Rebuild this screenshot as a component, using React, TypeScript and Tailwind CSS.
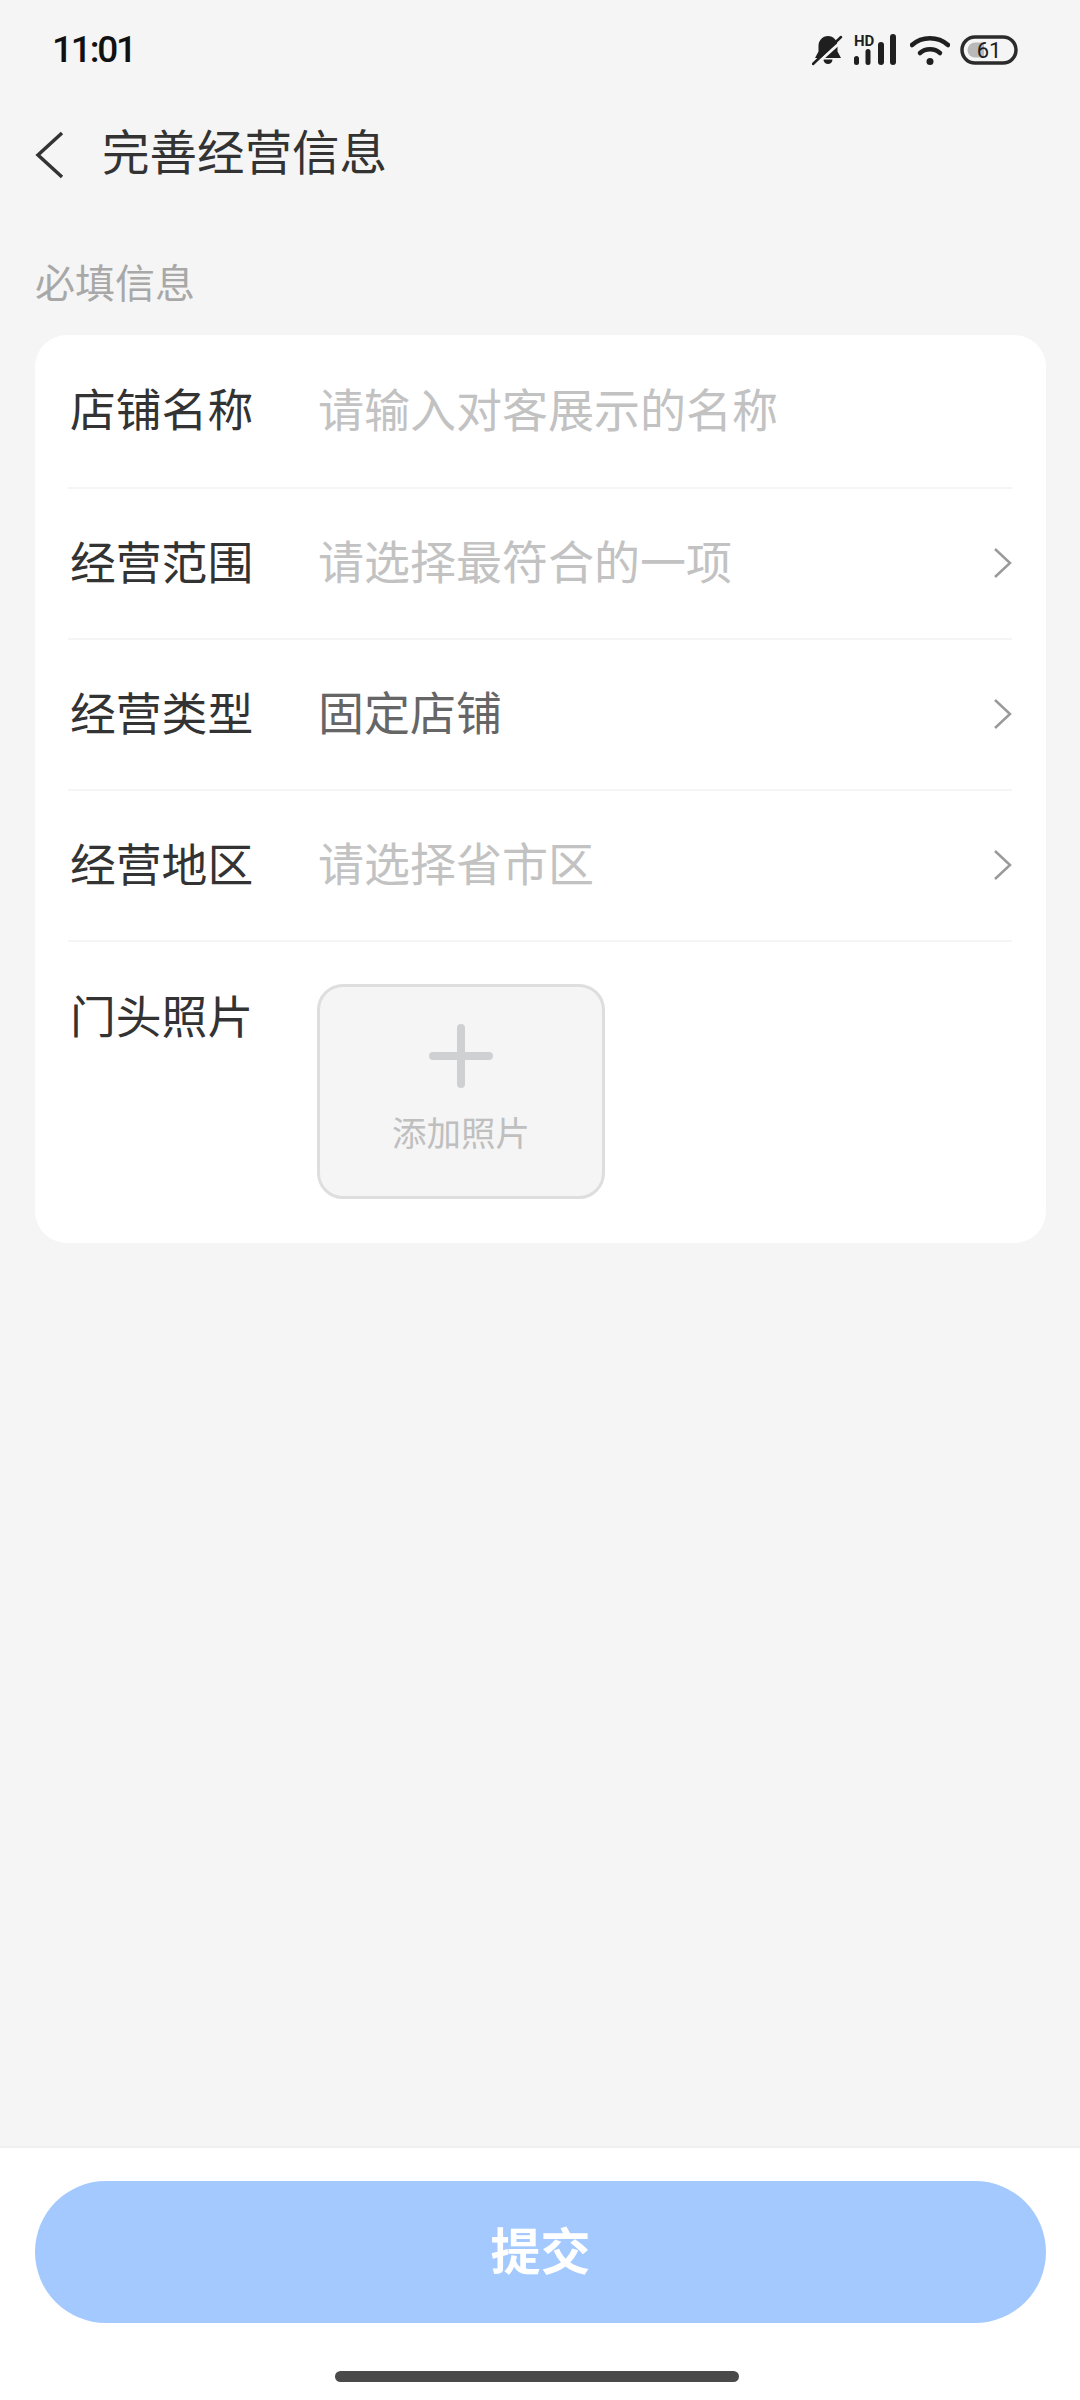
import React from 'react';

const cjk = "font-['Noto_Sans_CJK_SC','Noto_Sans',sans-serif]";

const Chevron = () => (
  <svg width="20" height="32" viewBox="0 0 20 32" fill="none" className="shrink-0 -mr-[1px] -mt-[2px]">
    <path d="M2 2 L17 16 L2 30" stroke="#9a9a9a" strokeWidth="2.5" />
  </svg>
);

const BellOff = () => (
  <svg width="32" height="32" viewBox="0 0 32 32" className="shrink-0">
    <path d="M16 2c-5.500 0-9.500 4.500-9.500 10v5.500L3 24h26l-3.500-6.500V12C25.500 6.500 21.500 2 16 2z" fill="#1f1f1f" />
    <path d="M11.500 25.500h9a4.500 4.500 0 0 1-9 0z" fill="#1f1f1f" />
    <path d="M2 32 L31 6" stroke="#f5f5f5" strokeWidth="3" />
    <path d="M1 30 L29 3" stroke="#1f1f1f" strokeWidth="2.500" strokeLinecap="round" />
  </svg>
);

const Signal = () => (
  <svg width="46" height="36" viewBox="0 -2 46 36" className="shrink-0">
    <text x="0" y="12" fontSize="15" fontWeight="700" fontFamily="Roboto, sans-serif" fill="#1f1f1f">HD</text>
    <rect x="0" y="22" width="5" height="9" rx="2.500" fill="#1f1f1f" />
    <rect x="11.500" y="15" width="5" height="16" rx="2.500" fill="#1f1f1f" />
    <rect x="24" y="8" width="6" height="23" rx="3" fill="#1f1f1f" />
    <rect x="36" y="0" width="6" height="31" rx="3" fill="#1f1f1f" />
  </svg>
);

const Wifi = () => (
  <svg width="40" height="32" viewBox="0 0 40 32" fill="none" className="shrink-0">
    <path d="M2 11 C12 2 28 2 38 11" stroke="#1f1f1f" strokeWidth="4.500" strokeLinecap="round" />
    <path d="M10 19 C15.500 14 24.500 14 30 19" stroke="#1f1f1f" strokeWidth="4.500" strokeLinecap="round" />
    <circle cx="20" cy="27.500" r="3.500" fill="#1f1f1f" />
  </svg>
);

const Battery = () => (
  <svg width="58" height="30" viewBox="0 0 58 30" className="shrink-0">
    <rect x="2" y="2" width="54" height="26" rx="13" fill="none" stroke="#2b2b2b" strokeWidth="3.500" />
    <path d="M15 7.500 h9 v15 h-9 a7.500 7.500 0 0 1 0-15z" fill="#b9b9b9" />
    <text x="29" y="23" textAnchor="middle" fontSize="22" fontFamily="Roboto, sans-serif" fill="#1f1f1f">61</text>
  </svg>
);

const FormRow = ({
  label,
  value,
  filled,
  arrow,
}: {
  label: string;
  value: string;
  filled?: boolean;
  arrow?: boolean;
}) => (
  <div className="flex items-center h-[151px] border-b-2 border-b-[#f5f5f5] first:h-[154px]">
    <div className="w-[250px] pl-[2px] pb-[8px] text-[45.8px] leading-[60px] text-[#333333]">{label}</div>
    <div className={`flex-1 pb-[9px] text-[46px] leading-[60px] ${filled ? 'text-[#666666]' : 'text-[#c2c2c2]'}`}>
      {value}
    </div>
    {arrow && <Chevron />}
  </div>
);

export default function App() {
  return (
    <div className={`w-[1080px] h-[2400px] flex flex-col bg-[#f5f5f5] ${cjk}`}>
      <div className="h-[100px] flex items-center justify-between pl-[52px] pr-[62px]">
        <span className="font-['Roboto',sans-serif] font-medium text-[37px] tracking-[-2.2px] text-[#111111]">11:01</span>
        <div className="flex items-center gap-[10px]">
          <BellOff />
          <Signal />
          <Wifi />
          <Battery />
        </div>
      </div>

      <div className="h-[106px] flex items-center pl-[35px]">
        <svg width="30" height="48" viewBox="0 0 30 48" fill="none" className="shrink-0 mt-[4px]">
          <path d="M27 2 L3 24 L27 46" stroke="#333333" strokeWidth="3.500" />
        </svg>
        <span className="ml-[37px] pb-[6px] text-[47.5px] text-[#333333]">完善经营信息</span>
      </div>

      <div className="pl-[35px] pt-[50px] pb-[29px] text-[40px] leading-[50px] text-[#a8a8a8]">必填信息</div>

      <div className="ml-[35px] mr-[34px] pl-[33px] pr-[34px] bg-white rounded-[32px]">
        <FormRow label="店铺名称" value="请输入对客展示的名称" />
        <FormRow label="经营范围" value="请选择最符合的一项" arrow />
        <FormRow label="经营类型" value="固定店铺" filled arrow />
        <FormRow label="经营地区" value="请选择省市区" arrow />
        <div className="flex pt-[42px] pb-[44px]">
          <div className="w-[249px] pl-[2px] text-[45.8px] leading-[60px] text-[#333333]">门头照片</div>
          <div className="w-[288px] h-[215px] flex flex-col items-center border-[3px] border-[#dedede] rounded-[26px] bg-[#f5f5f5]">
            <svg width="64" height="64" viewBox="0 0 64 64" className="mt-[37px] shrink-0">
              <path d="M32 4 V60 M4 32 H60" stroke="#cfd0d1" strokeWidth="8" strokeLinecap="round" />
            </svg>
            <div className="mt-[20px] text-[34.5px] leading-[46px] text-[#bfbfbf]">添加照片</div>
          </div>
        </div>
      </div>

      <div className="mt-auto h-[254px] flex flex-col items-center bg-white border-t-2 border-t-[#efefef]">
        <div className="mt-[33px] ml-[1px] w-[1011px] h-[142px] pb-[8px] flex items-center justify-center rounded-full bg-[#a3c9fe] text-white font-bold text-[50px]">
          提交
        </div>
        <div className="mt-[48px] -ml-[6px] w-[404px] h-[11px] rounded-full bg-[#4a4a4a]" />
      </div>
    </div>
  );
}
